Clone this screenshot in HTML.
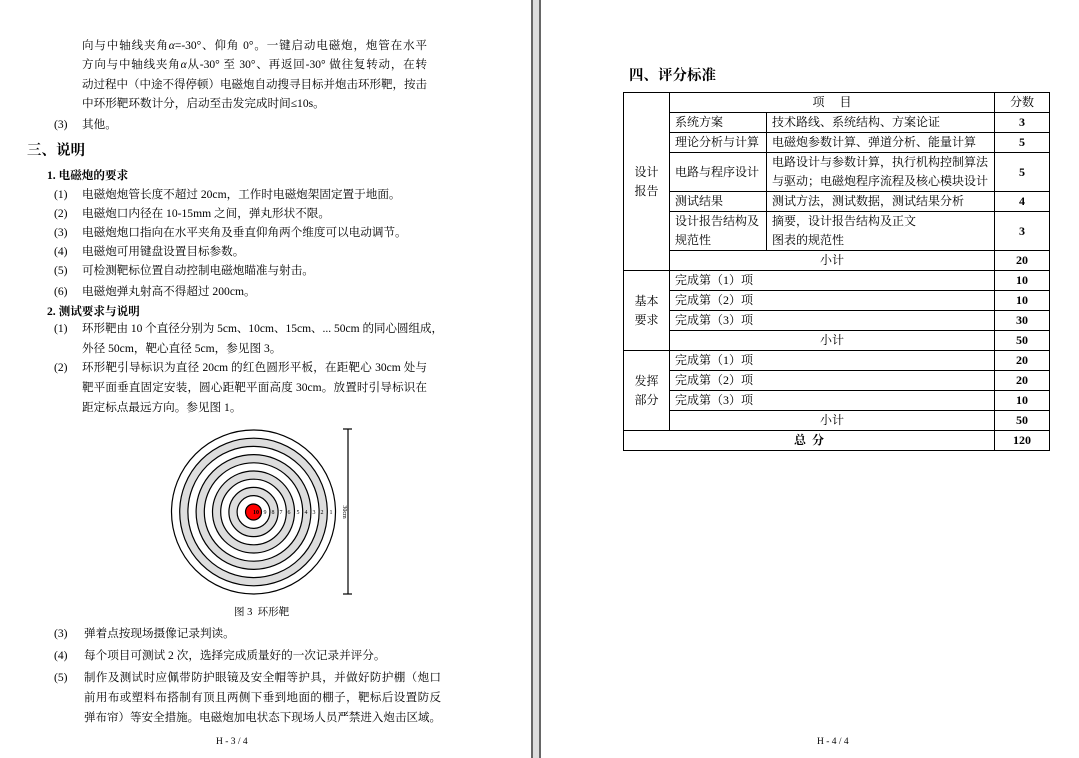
<!DOCTYPE html>
<html><head><meta charset="utf-8"><style>
html,body{margin:0;padding:0}
body{width:1079px;height:758px;position:relative;background:#fff;overflow:hidden;font-family:"Liberation Serif","Noto Serif CJK SC","Noto Sans CJK SC",serif;color:#000;font-size:11.6px}
.l{position:absolute;white-space:nowrap;line-height:14px}
.j{text-align:justify;text-align-last:justify;font-size:11.5px}
.n{position:absolute;line-height:14px;white-space:nowrap}
b{font-weight:bold}
table{position:absolute;left:623px;top:92px;border-collapse:collapse;font-size:12px;table-layout:fixed;width:426px}
td{border:1px solid #000;padding:0 0 0 5px;line-height:19px;height:18px;overflow:hidden}
td.c{text-align:center;padding:0}
td.s{text-align:center;font-weight:bold;padding:0}
</style></head><body>
<div style="position:absolute;left:531px;top:0;width:6px;height:758px;background:#ddd;border-left:2px solid #666;border-right:2px solid #666"></div>

<div class="l j" style="left:82px;top:39px;width:345px">向与中轴线夹角<i>α</i>=-30°、仰角 0°。一键启动电磁炮，炮管在水平</div>
<div class="l j" style="left:82px;top:58px;width:345px">方向与中轴线夹角<i>α</i>从-30° 至 30°、再返回-30° 做往复转动，在转</div>
<div class="l j" style="left:82px;top:78px;width:345px">动过程中（中途不得停顿）电磁炮自动搜寻目标并炮击环形靶，按击</div>
<div class="l" style="left:82px;top:97px">中环形靶环数计分，启动至击发完成时间≤10s。</div>
<div class="n" style="left:54px;top:118px">(3)</div><div class="l" style="left:82px;top:118px">其他。</div>
<div class="l" style="left:27px;top:143px;font-size:14.5px;line-height:16px;font-weight:bold">三、说明</div>
<div class="l" style="left:47px;top:169px"><b>1. 电磁炮的要求</b></div>
<div class="n" style="left:54px;top:188px">(1)</div><div class="l" style="left:82px;top:188px">电磁炮炮管长度不超过 20cm，工作时电磁炮架固定置于地面。</div>
<div class="n" style="left:54px;top:207px">(2)</div><div class="l" style="left:82px;top:207px">电磁炮口内径在 10-15mm 之间，弹丸形状不限。</div>
<div class="n" style="left:54px;top:226px">(3)</div><div class="l" style="left:82px;top:226px">电磁炮炮口指向在水平夹角及垂直仰角两个维度可以电动调节。</div>
<div class="n" style="left:54px;top:245px">(4)</div><div class="l" style="left:82px;top:245px">电磁炮可用键盘设置目标参数。</div>
<div class="n" style="left:54px;top:264px">(5)</div><div class="l" style="left:82px;top:264px">可检测靶标位置自动控制电磁炮瞄准与射击。</div>
<div class="n" style="left:54px;top:285px">(6)</div><div class="l" style="left:82px;top:285px">电磁炮弹丸射高不得超过 200cm。</div>
<div class="l" style="left:47px;top:305px"><b>2. 测试要求与说明</b></div>
<div class="n" style="left:54px;top:322px">(1)</div>
<div class="l j" style="left:82px;top:322px;width:345px">环形靶由 10 个直径分别为 5cm、10cm、15cm、... 50cm 的同心圆组成，</div>
<div class="l" style="left:82px;top:342px">外径 50cm，靶心直径 5cm，参见图 3。</div>
<div class="n" style="left:54px;top:361px">(2)</div>
<div class="l j" style="left:82px;top:361px;width:345px">环形靶引导标识为直径 20cm 的红色圆形平板，在距靶心 30cm 处与</div>
<div class="l j" style="left:82px;top:381px;width:345px">靶平面垂直固定安装，圆心距靶平面高度 30cm。放置时引导标识在</div>
<div class="l" style="left:82px;top:401px">距定标点最远方向。参见图 1。</div>

<svg style="position:absolute;left:0;top:0" width="530" height="758">
<g stroke="#000" stroke-width="1.2">
<circle cx="253.5" cy="512" r="82" fill="#fff"/>
<circle cx="253.5" cy="512" r="73.8" fill="#ddd"/>
<circle cx="253.5" cy="512" r="65.6" fill="#fff"/>
<circle cx="253.5" cy="512" r="57.4" fill="#ddd"/>
<circle cx="253.5" cy="512" r="49.2" fill="#fff"/>
<circle cx="253.5" cy="512" r="41" fill="#ddd"/>
<circle cx="253.5" cy="512" r="32.8" fill="#fff"/>
<circle cx="253.5" cy="512" r="24.6" fill="#ddd"/>
<circle cx="253.5" cy="512" r="16.4" fill="#fff"/>
<circle cx="253.5" cy="512" r="8" fill="#f00"/>
<line x1="348" y1="429" x2="348" y2="594"/>
<line x1="343" y1="429" x2="352" y2="429"/>
<line x1="343" y1="594" x2="352" y2="594"/>
</g>
<g font-size="6" font-family="Liberation Serif,serif" text-anchor="middle">
<text x="256" y="514" font-weight="bold">10</text>
<text x="265" y="514">9</text><text x="273" y="514">8</text><text x="281" y="514">7</text><text x="289" y="514">6</text><text x="298" y="514">5</text><text x="306" y="514">4</text><text x="314" y="514">3</text><text x="322" y="514">2</text><text x="331" y="514">1</text>
<text transform="translate(343,512) rotate(90)">30cm</text>
</g>
</svg>
<div class="l" style="left:234px;top:606px;font-size:10.5px">图 3 &nbsp;环形靶</div>
<div class="n" style="left:54px;top:627px">(3)</div><div class="l" style="left:84px;top:627px">弹着点按现场摄像记录判读。</div>
<div class="n" style="left:54px;top:649px">(4)</div><div class="l" style="left:84px;top:649px">每个项目可测试 2 次，选择完成质量好的一次记录并评分。</div>
<div class="n" style="left:54px;top:671px">(5)</div>
<div class="l j" style="left:84px;top:671px;width:357px">制作及测试时应佩带防护眼镜及安全帽等护具，并做好防护棚（炮口</div>
<div class="l j" style="left:84px;top:691px;width:357px">前用布或塑料布搭制有顶且两侧下垂到地面的棚子，靶标后设置防反</div>
<div class="l j" style="left:84px;top:711px;width:357px">弹布帘）等安全措施。电磁炮加电状态下现场人员严禁进入炮击区域。</div>
<div class="l" style="left:216px;top:735px;font-size:9.5px">H - 3 / 4</div>

<div class="l" style="left:629px;top:68px;font-size:14.5px;line-height:16px;font-weight:bold">四、评分标准</div>
<table>
<colgroup><col style="width:46px"><col style="width:97px"><col style="width:228px"><col style="width:55px"></colgroup>
<tr><td class="c" rowspan="7">设计<br>报告</td><td class="c" colspan="2">项&nbsp;&nbsp;&nbsp;&nbsp;&nbsp;目</td><td class="c">分数</td></tr>
<tr><td>系统方案</td><td>技术路线、系统结构、方案论证</td><td class="s">3</td></tr>
<tr><td>理论分析与计算</td><td>电磁炮参数计算、弹道分析、能量计算</td><td class="s">5</td></tr>
<tr><td style="height:37px">电路与程序设计</td><td>电路设计与参数计算，执行机构控制算法与驱动；电磁炮程序流程及核心模块设计</td><td class="s">5</td></tr>
<tr><td>测试结果</td><td>测试方法，测试数据，测试结果分析</td><td class="s">4</td></tr>
<tr><td style="height:37px">设计报告结构及规范性</td><td>摘要，设计报告结构及正文<br>图表的规范性</td><td class="s">3</td></tr>
<tr><td class="c" colspan="2">小计</td><td class="s">20</td></tr>
<tr><td class="c" rowspan="4">基本<br>要求</td><td colspan="2">完成第（1）项</td><td class="s">10</td></tr>
<tr><td colspan="2">完成第（2）项</td><td class="s">10</td></tr>
<tr><td colspan="2">完成第（3）项</td><td class="s">30</td></tr>
<tr><td class="c" colspan="2">小计</td><td class="s">50</td></tr>
<tr><td class="c" rowspan="4">发挥<br>部分</td><td colspan="2">完成第（1）项</td><td class="s">20</td></tr>
<tr><td colspan="2">完成第（2）项</td><td class="s">20</td></tr>
<tr><td colspan="2">完成第（3）项</td><td class="s">10</td></tr>
<tr><td class="c" colspan="2">小计</td><td class="s">50</td></tr>
<tr><td class="c" colspan="3"><b>总&nbsp;&nbsp;分</b></td><td class="s">120</td></tr>
</table>
<div class="l" style="left:817px;top:735px;font-size:9.5px">H - 4 / 4</div>
</body></html>
